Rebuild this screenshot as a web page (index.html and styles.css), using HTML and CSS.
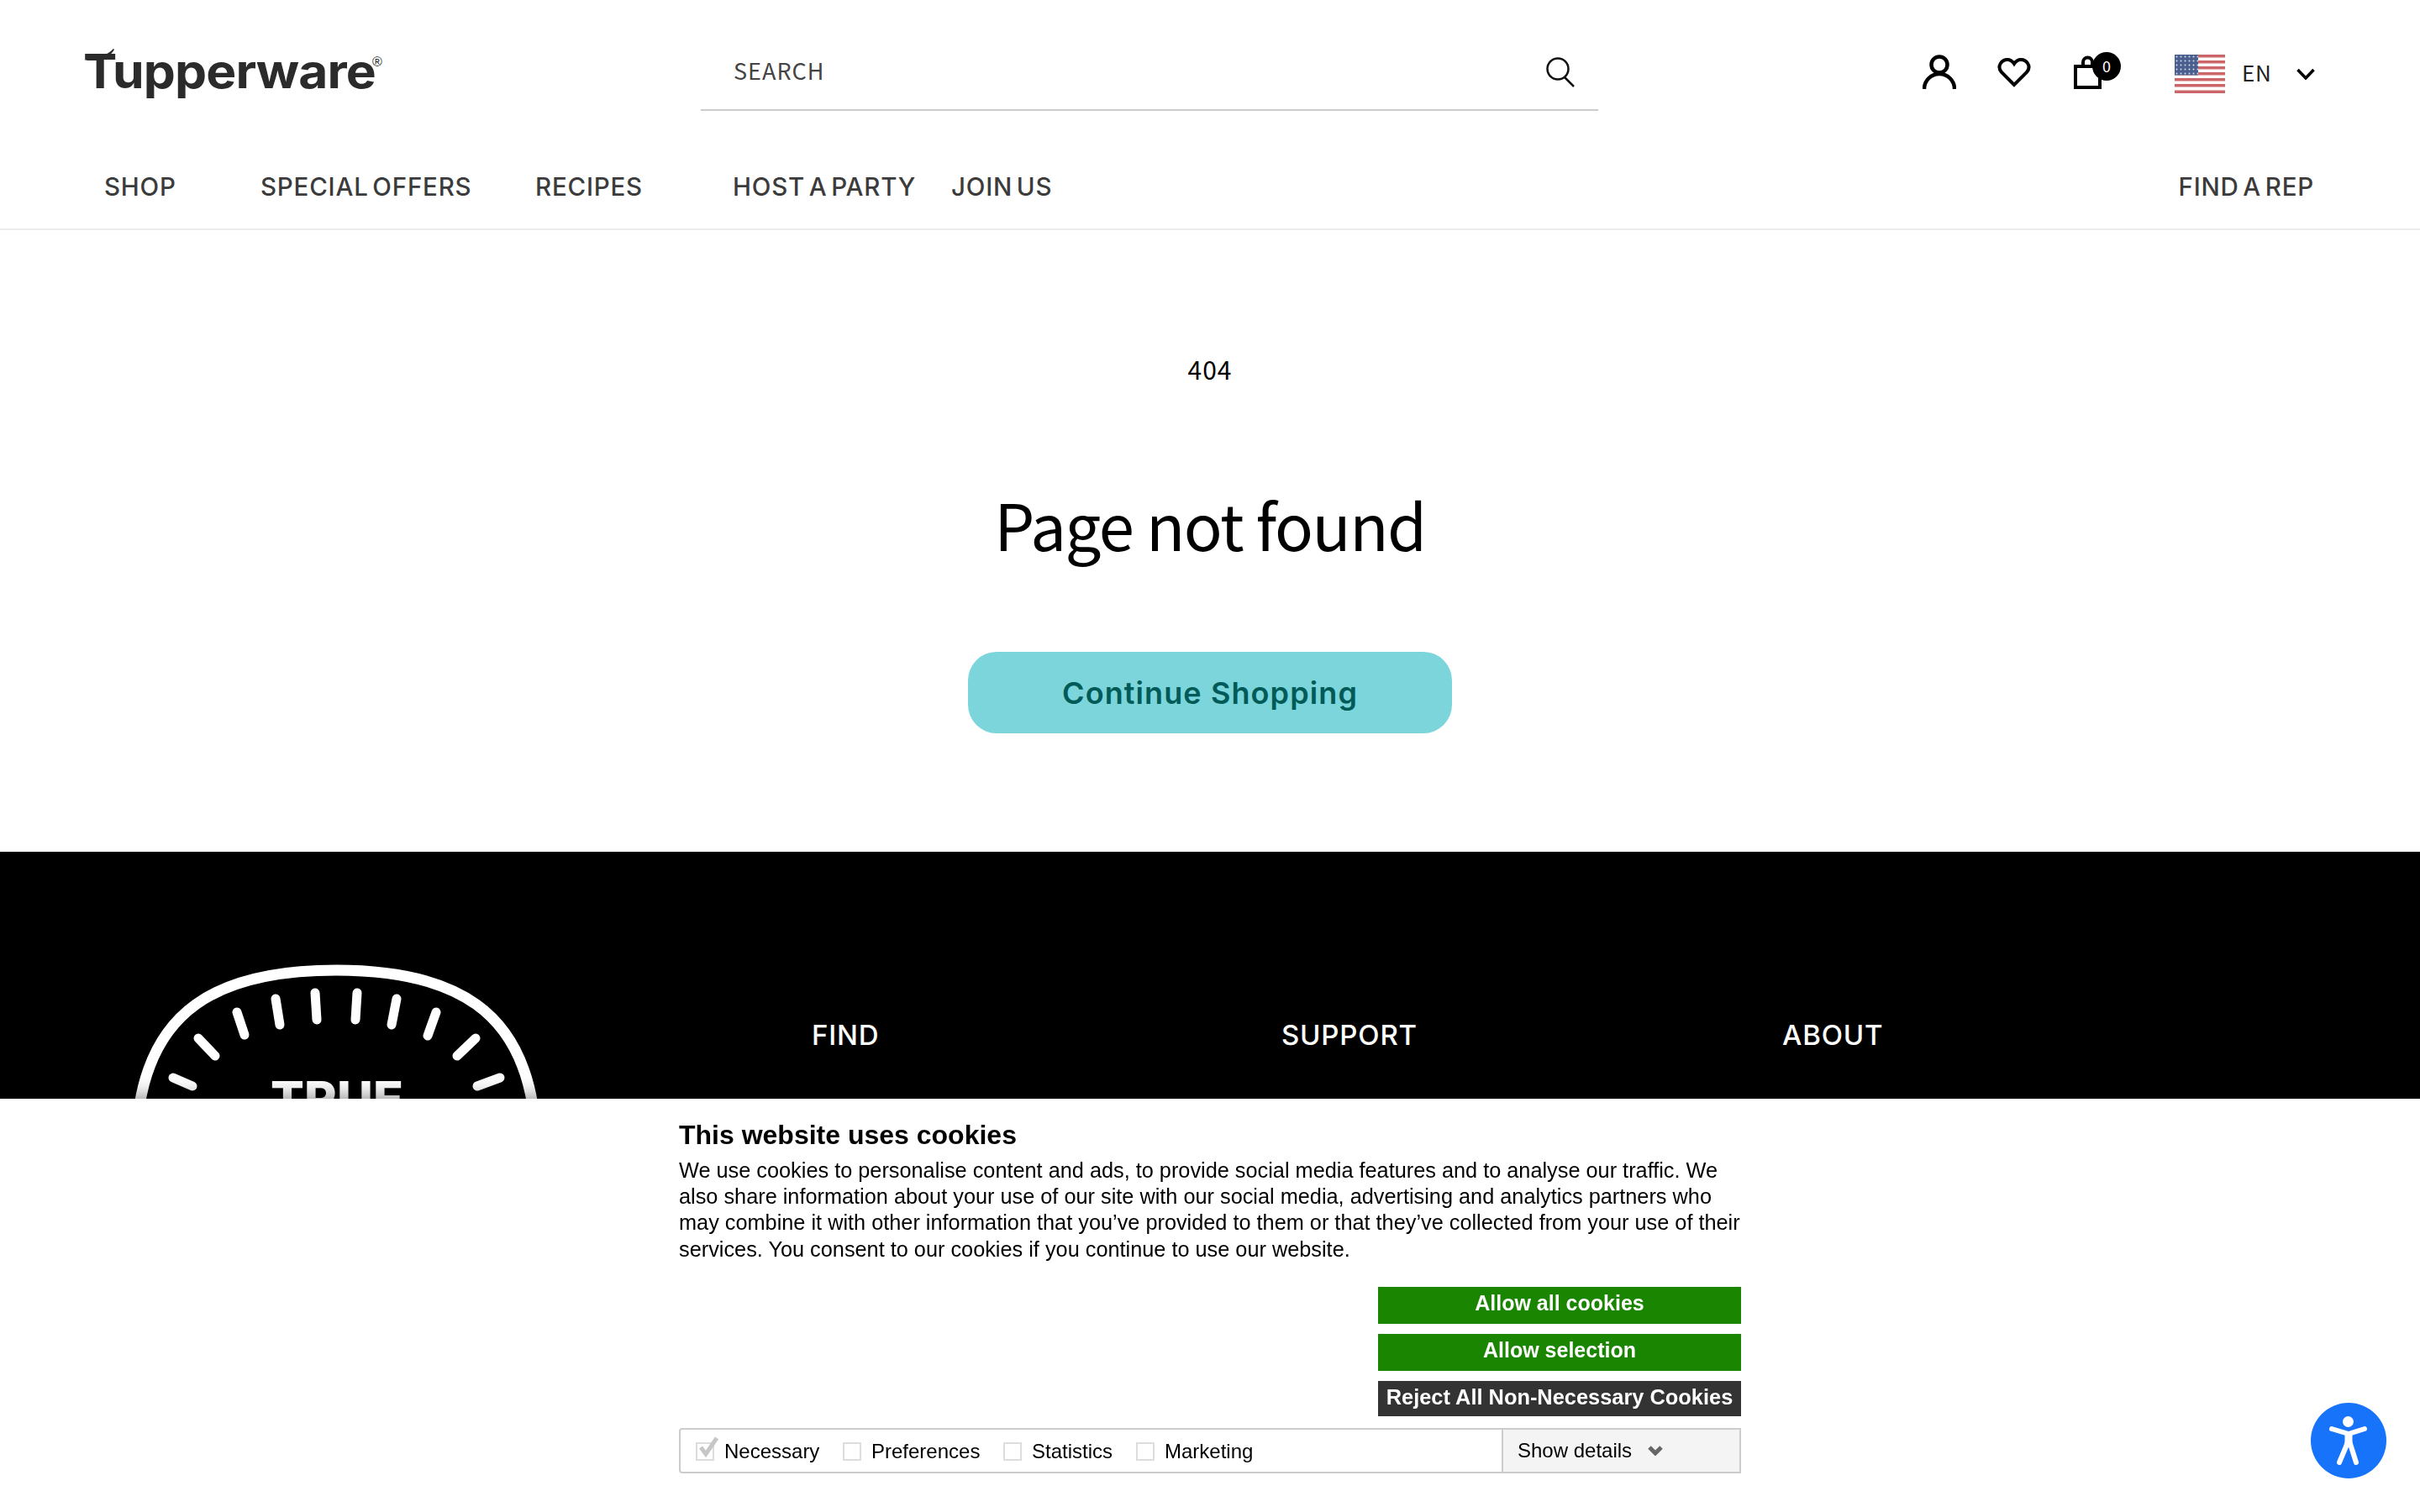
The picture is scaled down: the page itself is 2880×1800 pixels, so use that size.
FILE: index.html
```html
<!DOCTYPE html>
<html lang="en">
<head>
    <meta charset="UTF-8">
    <title>404 Not Found - Tupperware</title>
    <link rel="stylesheet" href="styles.css">
</head>
<body>
    <header class="masthead">
        <a class="logo" href="#">
            <svg class="logo-swoosh" viewBox="0 0 56 14"><path d="M0 14 C14 11 28 8 35 0 L36 1 C32 8 26 11 21 14 Z"/></svg>
            <span class="logo-word">Tupperware</span><span class="logo-reg">®</span>
        </a>
        <div class="search">
            <span class="search-label">SEARCH</span>
            <svg class="search-icon" viewBox="0 0 34 36"><circle cx="14" cy="14" r="12.5"/><path d="M22 24 L33 35"/></svg>
        </div>
        <div class="tools">
            <svg class="icon icon-person" viewBox="0 0 40 48"><circle cx="20" cy="13" r="9.5"/><path d="M2 42 A18 18 0 0 1 38 42"/></svg>
            <svg class="icon icon-heart" viewBox="0 0 40 48"><path d="M20 37 L5 22 C-1 15 5 7 12 7 C15.500 7 18 9 20 12 C22 9 24.500 7 28 7 C35 7 41 15 35 22 Z"/></svg>
            <div class="bag">
                <svg class="icon icon-bag" viewBox="0 0 56 48"><rect x="2" y="15" width="29" height="25"/><path d="M11 15 V10 A5.500 5.500 0 0 1 22 10 V15"/></svg>
                <span class="bag-count">0</span>
            </div>
            <svg class="flag" viewBox="0 0 60 46">
                <defs>
                    <pattern id="stars" width="5" height="5" patternUnits="userSpaceOnUse"><circle cx="2.500" cy="2.500" r="1" fill="#d5dbe8"/></pattern>
                </defs>
                <rect width="60" height="46" fill="#fff"/>
                <g fill="#cc6769">
                    <rect y="0" width="60" height="3.500"/><rect y="7" width="60" height="3.500"/><rect y="14" width="60" height="3.500"/>
                    <rect y="21" width="60" height="3.500"/><rect y="28" width="60" height="3.500"/><rect y="35" width="60" height="3.500"/>
                    <rect y="42.500" width="60" height="3.500"/>
                </g>
                <rect width="28" height="24.500" fill="#4b5f8e"/>
                <rect width="28" height="24.500" fill="url(#stars)"/>
            </svg>
            <span class="lang">EN</span>
            <svg class="lang-arrow" viewBox="0 0 22 14"><path d="M1.500 2 L11 12 L20.500 2"/></svg>
        </div>
    </header>

    <nav class="mainnav">
        <a href="#">SHOP</a>
        <a href="#">SPECIAL OFFERS</a>
        <a href="#">RECIPES</a>
        <a href="#">HOST A PARTY</a>
        <a href="#">JOIN US</a>
        <a class="nav-rep" href="#">FIND A REP</a>
    </nav>

    <main class="notfound">
        <p class="code">404</p>
        <h1>Page not found</h1>
        <a class="btn-continue" href="#">Continue Shopping</a>
    </main>

    <footer class="sitefooter">
        <svg class="gauge" viewBox="0 0 520 180">
            <path class="gauge-arc" d="M26 176 C43 70 110 15 260 15 C410 15 477 70 494 176"/>
            <g class="gauge-ticks">
                <path d="M66 143 L89 153"/><path d="M96 96 L116 117"/><path d="M142 65 L151 92"/>
                <path d="M188 49 L193 80"/><path d="M235 42 L237 74"/><path d="M285 42 L283 74"/>
                <path d="M332 49 L326 80"/><path d="M379 65 L369 93"/><path d="M426 96 L404 117"/>
                <path d="M455 143 L428 153"/>
            </g>
            <text class="gauge-text" x="261" y="190">TRUE</text>
        </svg>
        <h3>FIND</h3>
        <h3>SUPPORT</h3>
        <h3>ABOUT</h3>
    </footer>

    <section class="cookiebar">
        <div class="cookie-inner">
            <h2>This website uses cookies</h2>
            <p>We use cookies to personalise content and ads, to provide social media features and to analyse our traffic. We also share information about your use of our site with our social media, advertising and analytics partners who may combine it with other information that you’ve provided to them or that they’ve collected from your use of their services. You consent to our cookies if you continue to use our website.</p>
            <div class="cookie-buttons">
                <a class="cbtn cbtn-green" href="#">Allow all cookies</a>
                <a class="cbtn cbtn-green" href="#">Allow selection</a>
                <a class="cbtn cbtn-dark" href="#">Reject All Non-Necessary Cookies</a>
            </div>
            <div class="cookie-options">
                <div class="opt-list">
                    <label class="opt opt-necessary"><span class="box"><svg viewBox="0 0 26 26"><path d="M5 13 L11 21 L24 2"/></svg></span>Necessary</label>
                    <label class="opt opt-pref"><span class="box"></span>Preferences</label>
                    <label class="opt opt-stat"><span class="box"></span>Statistics</label>
                    <label class="opt"><span class="box"></span>Marketing</label>
                </div>
                <div class="show-details">Show details<svg viewBox="0 0 18 12"><path d="M2 2 L9 9 L16 2"/></svg></div>
            </div>
        </div>
    </section>

    <a class="a11y" href="#">
        <svg viewBox="0 0 90 90">
            <circle class="a11y-bg" cx="45" cy="45" r="45"/>
            <circle class="a11y-head" cx="44.500" cy="22.500" r="6.500"/>
            <path class="a11y-limb" d="M25 31 L45 37 L64 31"/>
            <path class="a11y-limb" d="M34 71 L42 52 L45 43 L48 52 L54 71"/>
            <path class="a11y-torso" d="M45 36 V50"/>
        </svg>
    </a>
</body>
</html>
```

FILE: styles.css
```css
html, body {
    margin: 0;
    height: 1800px;
    overflow: hidden;
    background: #fff;
}

body {
    font-family: "Noto Sans CJK JP", "Noto Sans", sans-serif;
    color: #000;
}

a {
    color: inherit;
    text-decoration: none;
}

/* Top row */
.masthead {
    display: flex;
    align-items: flex-start;
    height: 173px;
}

.logo {
    position: relative;
    display: block;
    width: 834px;
    padding-left: 99px;
    box-sizing: border-box;
    margin-top: 48px;
    color: #2b2b2b;
    font-family: Inter, sans-serif;
    font-weight: 700;
    white-space: nowrap;
}

.logo-word {
    display: inline-block;
    font-size: 56px;
    line-height: 74px;
    letter-spacing: -0.8px;
    transform: scaleX(1.08);
    transform-origin: left center;
}

.logo-reg {
    position: absolute;
    left: 443px;
    top: 17px;
    font-family: "Liberation Sans", sans-serif;
    font-size: 16px;
    line-height: 18px;
    font-weight: 400;
}

.logo-swoosh {
    position: absolute;
    left: 100px;
    top: 10px;
    width: 56px;
    height: 14px;
    fill: #2b2b2b;
}

.search {
    display: flex;
    align-items: center;
    justify-content: space-between;
    box-sizing: border-box;
    width: 1068px;
    height: 82px;
    margin-top: 50px;
    padding: 0 28px 14px 39px;
    border-bottom: 2px solid #ccc;
}

.search-label {
    font-size: 27px;
    letter-spacing: 1px;
    color: #444;
}

.search-icon {
    width: 34px;
    height: 36px;
    margin-top: 6px;
    fill: none;
    stroke: #111;
    stroke-width: 2.500;
}

.tools {
    display: flex;
    align-items: center;
    height: 48px;
    margin-top: 64px;
    margin-left: 386px;
}

.icon {
    display: block;
    height: 48px;
    fill: none;
    stroke: #000;
    stroke-width: 4.500;
}

.icon-person {
    width: 40px;
}

.icon-heart {
    width: 40px;
    margin-left: 49px;
    stroke-width: 4;
}

.bag {
    position: relative;
    width: 56px;
    margin-left: 51px;
}

.icon-bag {
    width: 56px;
    stroke-width: 4;
}

.bag-count {
    position: absolute;
    left: 22px;
    top: -2px;
    width: 34px;
    height: 34px;
    border-radius: 50%;
    background: #000;
    color: #fff;
    font-size: 18px;
    line-height: 33px;
    text-align: center;
}

.flag {
    width: 60px;
    height: 46px;
    margin-left: 64px;
}

.lang {
    width: 65px;
    margin-top: -5px;
    margin-left: 20px;
    font-size: 26px;
    letter-spacing: 0.6px;
    color: #222;
}

.lang-arrow {
    width: 22px;
    height: 14px;
    fill: none;
    stroke: #000;
    stroke-width: 3.500;
}

/* Main nav */
.mainnav {
    display: grid;
    grid-template-columns: 186px 327px 235px 260px 1fr auto;
    align-items: center;
    height: 97px;
    padding: 0 126px 2px 124px;
    box-sizing: content-box;
    border-bottom: 2px solid #ececec;
    font-family: Inter, sans-serif;
    font-size: 29.500px;
    font-weight: 500;
    letter-spacing: 0.8px;
    word-spacing: -4px;
    color: #3b3b3b;
}

/* 404 content */
.notfound {
    display: flex;
    flex-direction: column;
    align-items: center;
    height: 740px;
    padding-top: 145px;
    box-sizing: border-box;
}

.code {
    margin: 0;
    font-size: 30px;
    line-height: 40px;
    letter-spacing: 1px;
}

h1 {
    margin: 114px 0 0;
    font-size: 76px;
    font-weight: 400;
    line-height: 100px;
    letter-spacing: -1.500px;
}

.btn-continue {
    display: flex;
    align-items: center;
    justify-content: center;
    width: 576px;
    height: 97px;
    margin-top: 103px;
    border-radius: 34px;
    background: #7bd5da;
    color: #005a58;
    font-family: Inter, sans-serif;
    font-size: 36px;
    font-weight: 600;
    letter-spacing: 1.100px;
}

/* Footer, runs on below the cookie bar */
.sitefooter {
    display: grid;
    grid-template-columns: 826px 559px 596px 1fr;
    align-items: start;
    height: 786px;
    padding-left: 140px;
    background: #000;
    color: #fff;
}

.gauge {
    width: 520px;
    height: 180px;
    margin-top: 126px;
    overflow: hidden;
}

.gauge-arc {
    fill: none;
    stroke: #fff;
    stroke-width: 13;
}

.gauge-ticks path {
    stroke: #fff;
    stroke-width: 11;
    stroke-linecap: round;
}

.gauge-text {
    fill: #fff;
    font-family: Inter, sans-serif;
    font-size: 59px;
    font-weight: 800;
    text-anchor: middle;
}

.sitefooter h3 {
    margin: 197px 0 0;
    font-family: Inter, sans-serif;
    font-size: 33px;
    font-weight: 500;
    line-height: 42px;
    letter-spacing: 0.8px;
}

/* Cookie bar */
.cookiebar {
    position: fixed;
    left: 0;
    right: 0;
    bottom: 0;
    height: 492px;
    background: #fff;
    box-shadow: 0 0 24px rgba(0, 0, 0, 0.55);
    font-family: "Liberation Sans", Arial, sans-serif;
}

.cookie-inner {
    display: flex;
    flex-direction: column;
    width: 1264px;
    margin: 0 auto;
    padding-top: 23px;
}

.cookiebar h2 {
    margin: 0;
    font-size: 32px;
    line-height: 40px;
}

.cookiebar p {
    margin: 7px -12px 0 0;
    font-size: 25.300px;
    line-height: 31.200px;
}

.cookie-buttons {
    display: flex;
    flex-direction: column;
    align-self: flex-end;
    gap: 12px;
    width: 432px;
    margin-top: 29px;
}

.cbtn {
    display: block;
    height: 44px;
    color: #fff;
    font-size: 25px;
    font-weight: 700;
    line-height: 39px;
    text-align: center;
}

.cbtn-green {
    background: #198500;
}

.cbtn-dark {
    height: 42px;
    background: #333;
    font-size: 25.400px;
    white-space: nowrap;
}

.cookie-options {
    display: flex;
    box-sizing: border-box;
    height: 54px;
    margin-top: 14px;
    border: 2px solid #ccc;
    border-radius: 4px 0 0 4px;
    font-size: 24px;
}

.opt-list {
    display: flex;
    align-items: center;
    flex: 1;
    padding-left: 18px;
    padding-top: 2px;
}

.opt {
    display: flex;
    align-items: center;
    gap: 12px;
}

.opt-necessary {
    width: 175px;
}

.opt-pref {
    width: 191px;
}

.opt-stat {
    width: 158px;
}

.box {
    position: relative;
    box-sizing: border-box;
    width: 22px;
    height: 22px;
    border: 2px solid #ddd;
    background: #fff;
}

.box svg {
    position: absolute;
    left: -1px;
    top: -9px;
    width: 26px;
    height: 26px;
    fill: none;
    stroke: #c6c6c6;
    stroke-width: 5;
}

.show-details {
    display: flex;
    align-items: center;
    gap: 19px;
    box-sizing: border-box;
    width: 283px;
    padding-left: 17px;
    border-left: 2px solid #ccc;
    background: #f4f4f4;
}

.show-details svg {
    width: 18px;
    height: 12px;
    fill: none;
    stroke: #666;
    stroke-width: 5;
}

/* Accessibility button */
.a11y {
    position: fixed;
    left: 2750px;
    top: 1670px;
    width: 90px;
    height: 90px;
}

.a11y svg {
    display: block;
}

.a11y-bg {
    fill: #1773fa;
}

.a11y-head {
    fill: #fff;
}

.a11y-limb {
    fill: none;
    stroke: #fff;
    stroke-width: 6;
    stroke-linecap: round;
    stroke-linejoin: round;
}

.a11y-torso {
    stroke: #fff;
    stroke-width: 9;
}
```
